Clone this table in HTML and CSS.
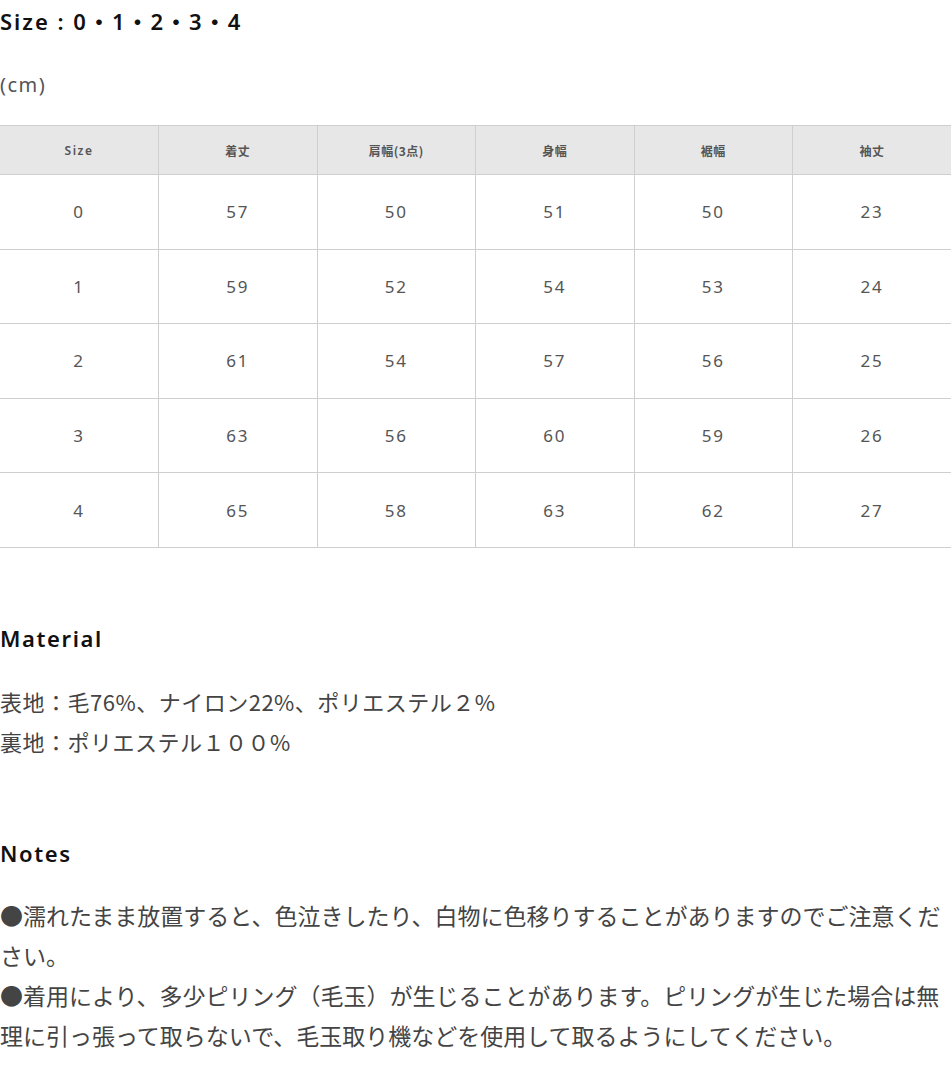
FILE: index.html
```html
<!DOCTYPE html>
<html lang="ja">
<head>
<meta charset="utf-8">
<link rel="stylesheet" href="styles.css">
</head>
<body>
<div class="page">
  <h2 class="heading size-title">Size : 0・1・2・3・4</h2>
  <p class="unit">(cm)</p>
  <table class="size-table">
    <thead>
      <tr><th class="latin">Size</th><th>着丈</th><th>肩幅(3点)</th><th>身幅</th><th>裾幅</th><th>袖丈</th></tr>
    </thead>
    <tbody>
      <tr><td>0</td><td>57</td><td>50</td><td>51</td><td>50</td><td>23</td></tr>
      <tr><td>1</td><td>59</td><td>52</td><td>54</td><td>53</td><td>24</td></tr>
      <tr><td>2</td><td>61</td><td>54</td><td>57</td><td>56</td><td>25</td></tr>
      <tr><td>3</td><td>63</td><td>56</td><td>60</td><td>59</td><td>26</td></tr>
      <tr><td>4</td><td>65</td><td>58</td><td>63</td><td>62</td><td>27</td></tr>
    </tbody>
  </table>

  <h2 class="heading material-title">Material</h2>
  <div class="text-block material">
    <p>表地：毛76%、ナイロン22%、ポリエステル２%</p>
    <p>裏地：ポリエステル１００%</p>
  </div>

  <h2 class="heading notes-title">Notes</h2>
  <div class="text-block notes">
    <p>●濡れたまま放置すると、色泣きしたり、白物に色移りすることがありますのでご注意ください。</p>
    <p>●着用により、多少ピリング（毛玉）が生じることがあります。ピリングが生じた場合は無理に引っ張って取らないで、毛玉取り機などを使用して取るようにしてください。</p>
  </div>
</div>
</body>
</html>
```

FILE: styles.css
```css
html, body {
  margin: 0;
  padding: 0;
  background: #fff;
}

.page {
  width: 951px;
  font-family: "Noto Sans", "Noto Sans CJK JP", sans-serif;
  color: #444;
}

.heading {
  margin: 0;
  font-family: "Noto Sans", "Noto Sans CJK JP", sans-serif;
  font-weight: 600;
  font-size: 22px;
  line-height: 42px;
  letter-spacing: 1.6px;
  color: #111;
}

.size-title {
  margin-top: 0;
  letter-spacing: 2px;
}

.unit {
  margin: 23px 0 0;
  font-size: 20px;
  line-height: 40px;
  letter-spacing: 1.5px;
  color: #555;
}

.size-table {
  margin-top: 20px;
  width: 951px;
  border-collapse: collapse;
  table-layout: fixed;
}

.size-table th,
.size-table td {
  text-align: center;
  border: 1px solid #cfcfcf;
  padding: 0;
}

.size-table tr > :first-child {
  border-left: none;
}

.size-table tr > :last-child {
  border-right: none;
}

.size-table th {
  height: 48px;
  background: #e7e7e7;
  font-family: "Noto Sans CJK JP", sans-serif;
  font-weight: 700;
  font-size: 12px;
  color: #555;
  letter-spacing: 0.5px;
}

.size-table th.latin {
  font-family: "Noto Sans", sans-serif;
  font-weight: 600;
  letter-spacing: 1.5px;
}

.size-table td {
  height: 73.6px;
  font-size: 17px;
  letter-spacing: 1.8px;
  color: #555;
}

.material-title {
  margin-top: 70px;
  line-height: 40px;
}

.notes-title {
  margin-top: 72px;
  line-height: 40px;
}

.text-block {
  margin-top: 23px;
  font-family: "Noto Sans CJK JP", sans-serif;
  color: #444;
}

.text-block p {
  margin: 0;
  line-height: 40px;
}

.material {
  font-size: 22px;
  letter-spacing: 0.5px;
}

.notes {
  margin-top: 22px;
  font-size: 23px;
}
```
